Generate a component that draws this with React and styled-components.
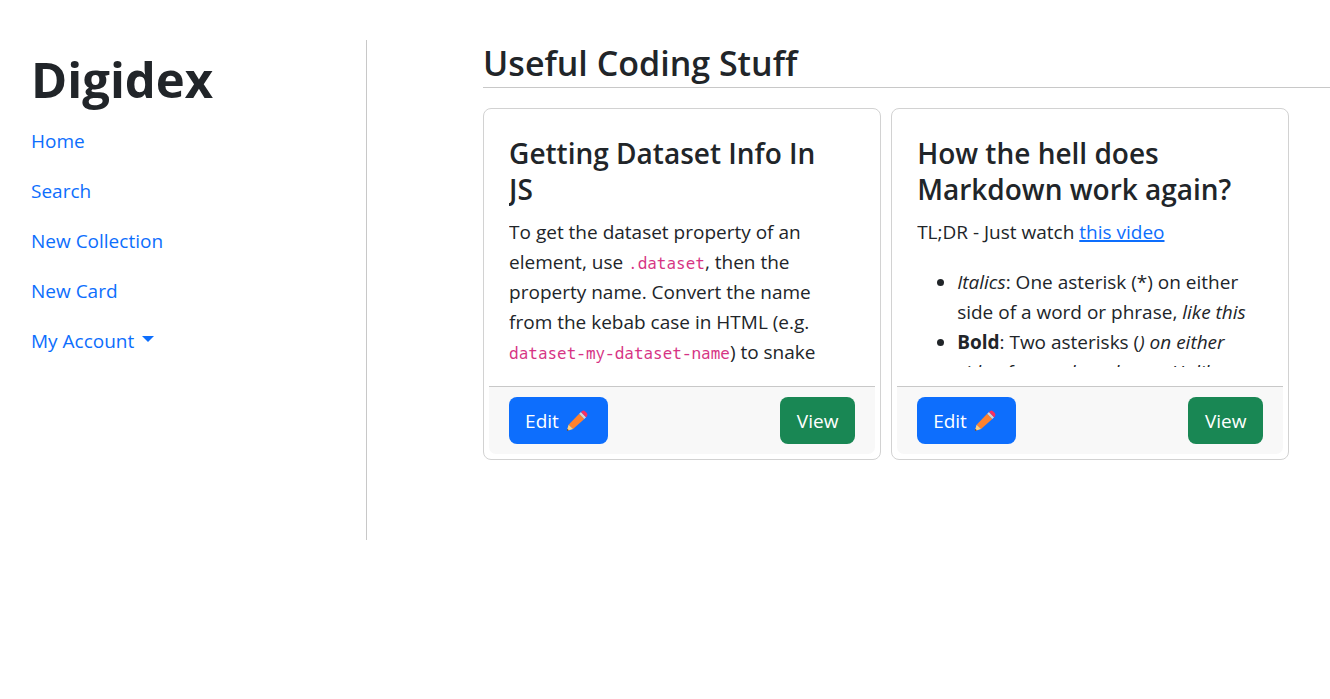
import React from "react";
import styled, { createGlobalStyle } from "styled-components";

const GlobalStyle = createGlobalStyle`
  *, *::before, *::after { box-sizing: border-box; }
  body {
    margin: 0;
    background: #fff;
    color: #212529;
    font-family: "Open Sans", "Noto Sans", sans-serif;
    font-size: 19px;
    line-height: 30px;
    overflow-x: hidden;
  }
`;

const Page = styled.div`
  display: grid;
  grid-template-columns: 27.6% 1fr;
  align-items: start;
  padding-top: 40px;
`;

const Sidebar = styled.aside`
  min-height: 500px;
  padding: 10px 20px 0 31px;
  border-right: 1px solid #c8c8c8;
`;

const Brand = styled.h1`
  margin: 0 0 8px;
  font-size: 49px;
  font-weight: 700;
  line-height: 58px;
`;

const Nav = styled.nav`
  display: flex;
  flex-direction: column;
  align-items: flex-start;
`;

const NavLink = styled.a`
  display: inline-flex;
  align-items: center;
  gap: 8px;
  padding: 10px 0;
  color: #0d6efd;
  text-decoration: none;
`;

const Caret = styled.span`
  border-top: 6px solid currentColor;
  border-left: 6px solid transparent;
  border-right: 6px solid transparent;
  margin-bottom: 4px;
`;

const Main = styled.main`
  padding-left: 116px;
`;

const PageTitle = styled.h2`
  margin: 0 0 20px;
  padding-bottom: 1px;
  border-bottom: 1px solid #c8c8c8;
  font-size: 34px;
  font-weight: 600;
  line-height: 46px;
`;

const CardList = styled.div`
  display: flex;
  flex-wrap: wrap;
  gap: 10px;
`;

const Card = styled.article`
  width: 47%;
  padding: 5px;
  border: 1px solid #d2d2d2;
  border-radius: 8px;
`;

const CardBody = styled.div`
  padding: 20px 20px 19px;
`;

const CardContent = styled.div`
  height: 233px;
  overflow: hidden;
`;

const CardTitle = styled.h3`
  margin: 1px 0 10px;
  padding-right: 20px;
  font-size: 28px;
  font-weight: 600;
  line-height: 36px;
`;

const Text = styled.p`
  margin: 0 0 20px;
`;

const Code = styled.code`
  color: #d63384;
  font-family: "Noto Sans Mono", "DejaVu Sans Mono", monospace;
  font-size: 16px;
  line-height: 1;
`;

const TextLink = styled.a`
  color: #0d6efd;
  text-decoration-thickness: 2px;
`;

const List = styled.ul`
  margin: 0;
  padding: 0 10px 0 40px;
`;

const CardFooter = styled.footer`
  display: flex;
  justify-content: space-between;
  padding: 10px 20px;
  border-top: 1px solid #c8c8c8;
  border-radius: 0 0 7px 7px;
  background: #f8f8f8;
`;

const Button = styled.button`
  display: inline-flex;
  align-items: center;
  justify-content: center;
  gap: 7px;
  min-width: 75px;
  height: 47px;
  padding: 0 16px;
  border: 0;
  border-radius: 8px;
  background: ${(p) => (p.$tone === "success" ? "#198754" : "#0d6efd")};
  color: #fff;
  font: inherit;
`;

const Pencil = () => (
  <svg width="26" height="22" viewBox="0 0 26 22" aria-hidden="true">
    <path d="M13.2 3.8 18.3 8.9 7.1 19.1 2.6 14.8Z" fill="#ff822d" />
    <path d="M2.6 14.8 7.1 19.1 1.6 20.7Q.8 20.9 1 20.1Z" fill="#ffce7c" />
    <path d="M1.4 18.9 2.9 20.3 1.5 20.8Q.7 20.9 1 20.1Z" fill="#402a32" />
    <path d="M13.2 3.8 15 2.1 20.1 7.2 18.3 8.9Z" fill="#d3d3d3" />
    <path d="M15 2.1 16.2 1Q17.6 0 19 1.3L20.8 3.1Q22 4.6 21 6.2L20.1 7.2Z" fill="#f92f60" />
  </svg>
);

const CollectionCard = ({ title, children }) => (
  <Card>
    <CardBody>
      <CardContent>
        <CardTitle>{title}</CardTitle>
        {children}
      </CardContent>
    </CardBody>
    <CardFooter>
      <Button type="button">
        Edit <Pencil />
      </Button>
      <Button type="button" $tone="success">
        View
      </Button>
    </CardFooter>
  </Card>
);

export default function App() {
  return (
    <>
      <GlobalStyle />
      <Page>
        <Sidebar>
          <Brand>Digidex</Brand>
          <Nav>
            <NavLink href="#home">Home</NavLink>
            <NavLink href="#search">Search</NavLink>
            <NavLink href="#new-collection">New Collection</NavLink>
            <NavLink href="#new-card">New Card</NavLink>
            <NavLink href="#account">
              My Account <Caret />
            </NavLink>
          </Nav>
        </Sidebar>
        <Main>
          <PageTitle>Useful Coding Stuff</PageTitle>
          <CardList>
            <CollectionCard title="Getting Dataset Info In JS">
              <Text>
                To get the dataset property of an element, use <Code>.dataset</Code>, then the
                property name. Convert the name from the kebab case in HTML (e.g.{" "}
                <Code>dataset-my-dataset-name</Code>) to snake
              </Text>
            </CollectionCard>
            <CollectionCard title="How the hell does Markdown work again?">
              <Text>
                TL;DR - Just watch <TextLink href="#video">this video</TextLink>
              </Text>
              <List>
                <li>
                  <em>Italics</em>: One asterisk (*) on either side of a word or phrase,{" "}
                  <em>like this</em>
                </li>
                <li>
                  <strong>Bold</strong>: Two asterisks (
                  <em>) on either side of a word or phrase. Unlike</em>
                </li>
              </List>
            </CollectionCard>
          </CardList>
        </Main>
      </Page>
    </>
  );
}
